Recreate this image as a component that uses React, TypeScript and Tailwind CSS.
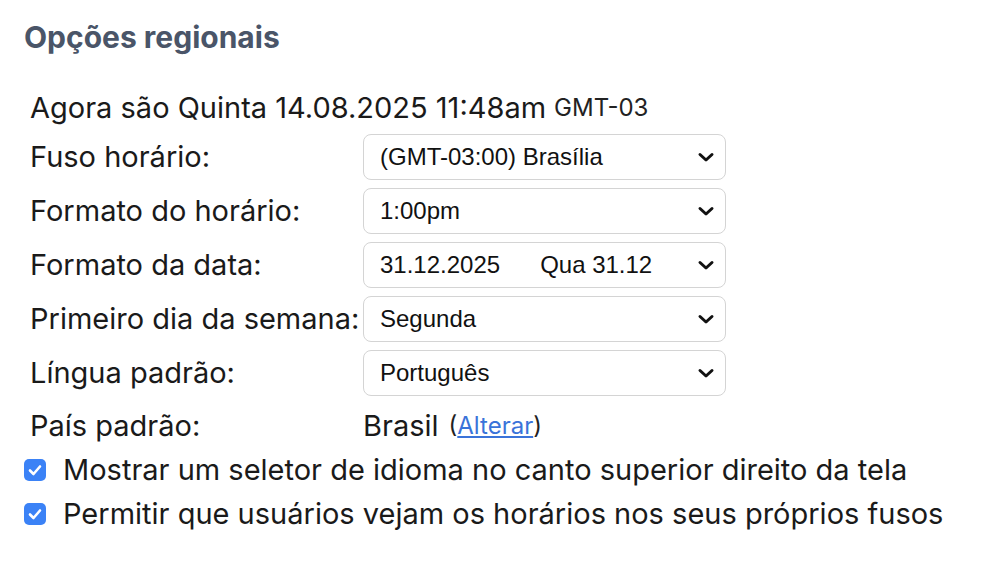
import { useState } from 'react';

const SELECTS = [
  { label: 'Fuso horário:', value: '(GMT-03:00) Brasília' },
  { label: 'Formato do horário:', value: '1:00pm' },
  { label: 'Formato da data:', value: '31.12.2025\u00a0\u00a0\u00a0\u00a0\u00a0\u00a0Qua 31.12' },
  { label: 'Primeiro dia da semana:', value: 'Segunda' },
  { label: 'Língua padrão:', value: 'Português' },
];

function Chevron() {
  return (
    <svg width="18" height="12" viewBox="0 0 18 12" className="shrink-0">
      <path d="M3 3.5 L9 9 L15 3.5" fill="none" stroke="#111" strokeWidth="3" strokeLinecap="round" strokeLinejoin="round" />
    </svg>
  );
}

function Check({ checked, onToggle, children }: { checked: boolean; onToggle: () => void; children: React.ReactNode }) {
  return (
    <label className="flex items-center gap-[17px] cursor-pointer h-[44px]">
      <span
        onClick={onToggle}
        className={`w-[22px] h-[22px] rounded-[5px] flex items-center justify-center ${checked ? 'bg-[#3b82f6]' : 'border border-gray-400 bg-white'}`}
      >
        {checked && (
          <svg width="14" height="12" viewBox="0 0 14 12">
            <path d="M2 6.5 L5.5 10 L12 2.5" fill="none" stroke="#fff" strokeWidth="2.6" strokeLinecap="round" strokeLinejoin="round" />
          </svg>
        )}
      </span>
      <span>{children}</span>
    </label>
  );
}

export default function App() {
  const [showLang, setShowLang] = useState(true);
  const [ownZones, setOwnZones] = useState(true);

  return (
    <main className="min-h-screen bg-white text-[#1a1a1a] text-[29px] font-['Inter','Noto_Sans',sans-serif] px-[24px] pt-[20px]">
      <h2 className="text-[30px] font-bold text-[#4a5568] leading-[34px]">Opções regionais</h2>

      <div className="mt-[32px] pl-[6px]">
        <div className="h-[44px] flex items-center">
          Agora são Quinta 14.08.2025 11:48am
          <span className="ml-[8px] text-[24px] text-[#222]">GMT-03</span>
        </div>

        <div className="mt-[4px] grid grid-cols-[333px_363px] gap-y-[8px] items-center">
          {SELECTS.map(({ label, value }) => (
            <div key={label} className="contents">
              <span>{label}</span>
              <div className="h-[46px] flex items-center justify-between border border-[#d4d4d4] rounded-[8px] pl-[16px] pr-[10px] font-['Liberation_Sans',Arial,sans-serif] text-[24px] text-[#111] whitespace-pre">
                <span>{value}</span>
                <Chevron />
              </div>
            </div>
          ))}
          <span className="h-[44px] flex items-center">País padrão:</span>
          <span className="h-[44px] flex items-center">
            Brasil
            <span className="ml-[10px] text-[24px] text-[#222]">
              (<a href="#" className="text-[#3a73d9] underline underline-offset-2">Alterar</a>)
            </span>
          </span>
        </div>
      </div>

      <div>
        <Check checked={showLang} onToggle={() => setShowLang(!showLang)}>
          Mostrar um seletor de idioma no canto superior direito da tela
        </Check>
        <Check checked={ownZones} onToggle={() => setOwnZones(!ownZones)}>
          Permitir que usuários vejam os horários nos seus próprios fusos
        </Check>
      </div>
    </main>
  );
}
